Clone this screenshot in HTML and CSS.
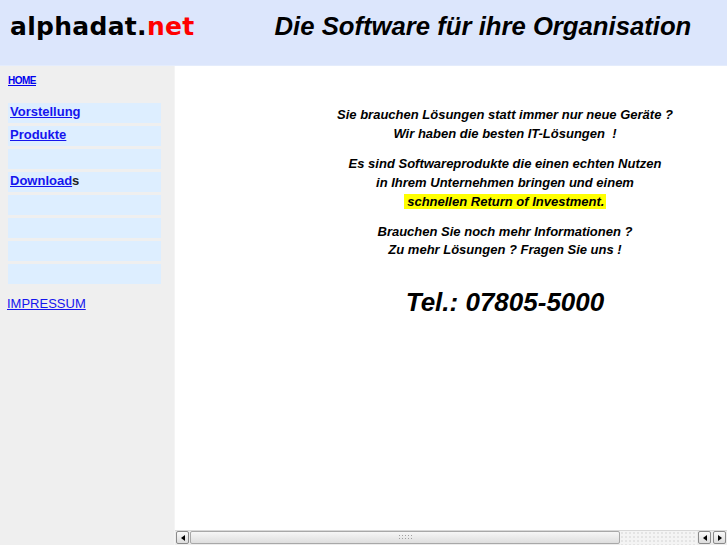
FILE: index.html
```html
<!DOCTYPE html>
<html lang="de">
<head>
<meta charset="utf-8">
<title>alphadat.net</title>
<link rel="stylesheet" href="styles.css">
</head>
<body>
<header class="top">
  <div class="logo">alphadat.<span class="net">net</span></div>
  <div class="slogan">Die Software für ihre Organisation</div>
</header>
<div class="layout">
  <aside class="side">
    <a class="home" href="#">HOME</a>
    <ul class="menu">
      <li><a href="#">Vorstellung</a></li>
      <li><a href="#">Produkte</a></li>
      <li></li>
      <li><a href="#">Download</a>s</li>
      <li></li>
      <li></li>
      <li></li>
      <li></li>
    </ul>
    <a class="impressum" href="#">IMPRESSUM</a>
  </aside>
  <main class="main">
    <div class="content">
      <p class="para">Sie brauchen Lösungen statt immer nur neue Geräte ?<br>Wir haben die besten IT-Lösungen&nbsp; !</p>
      <p class="para">Es sind Softwareprodukte die einen echten Nutzen<br>in Ihrem Unternehmen bringen und einem<br><span class="mark">&nbsp;schnellen Return of Investment.</span></p>
      <p class="para">Brauchen Sie noch mehr Informationen ?<br>Zu mehr Lösungen ? Fragen Sie uns !</p>
      <p class="tel">Tel.: 07805-5000</p>
    </div>
    <div class="hscroll">
      <div class="btn"><span class="tri left"></span></div>
      <div class="thumb"><span class="grip"></span></div>
      <div class="track"></div>
      <div class="btn"><span class="tri left"></span></div>
      <div class="btn"><span class="tri right"></span></div>
    </div>
  </main>
</div>
</body>
</html>
```

FILE: styles.css
```css
html, body {
  margin: 0;
  padding: 0;
  height: 545px;
  overflow: hidden;
}
body {
  font-family: "Liberation Sans", Arial, sans-serif;
  background: #ffffff;
}
.top {
  height: 66px;
  background: #dce6fc;
  display: flex;
  align-items: flex-start;
  border-bottom: 1px solid #e4ecfc;
  box-sizing: border-box;
}
.logo {
  font-family: "DejaVu Sans", Verdana, sans-serif;
  font-weight: bold;
  font-size: 25px;
  color: #000;
  margin: 12px 0 0 10px;
  line-height: 30px;
  letter-spacing: 0.3px;
}
.net { color: #ff0000; }
.slogan {
  font-weight: bold;
  font-style: italic;
  font-size: 25.7px;
  line-height: 30px;
  margin: 11px 0 0 80px;
  color: #000;
}
.layout {
  display: grid;
  grid-template-columns: 175px 1fr;
  height: 479px;
}
.side {
  background: #efefef;
  border-right: 1px solid #f4f4f4;
  padding: 8px 0 0 0;
}
.home {
  display: block;
  margin-left: 8px;
  font-size: 10px;
  font-weight: bold;
  color: #0000ee;
  letter-spacing: -0.5px;
  line-height: 14px;
}
.menu {
  list-style: none;
  margin: 15px 0 0 8px;
  padding: 0;
  width: 153px;
  display: flex;
  flex-direction: column;
  gap: 3px;
}
.menu li {
  background: #ddeeff;
  height: 20px;
  font-size: 13px;
  font-weight: bold;
  line-height: 17px;
  padding-left: 2px;
  color: #222;
}
.menu a { color: #1515ee; }
.impressum {
  display: block;
  margin: 12px 0 0 7px;
  font-size: 13px;
  color: #1515ee;
  line-height: 16px;
}
.main {
  display: flex;
  flex-direction: column;
  min-width: 0;
  overflow: hidden;
}
.content {
  flex: 1;
  padding: 40px 0 0 0;
  width: 660px;
  font-weight: bold;
  font-style: italic;
  font-size: 13px;
  text-align: center;
  color: #000;
}
.para {
  margin: 0 0 11px 0;
  line-height: 18.7px;
}
.para + .para { margin-top: 0; }
.para:first-child { margin-bottom: 12px; }
.mark { background: #ffff00; padding-right: 2px; }
.tel {
  margin: 27px 0 0 0;
  font-size: 26px;
  line-height: 30px;
}
.hscroll {
  height: 15px;
  display: flex;
  background: #ececec;
  border-top: 1px solid #d8d8d8;
  box-sizing: border-box;
  flex: none;
}
.btn {
  width: 13px;
  height: 13px;
  margin: 0 1px;
  border: 1px solid #8a8a8a;
  border-radius: 2px;
  background: linear-gradient(#fafafa, #dcdcdc);
  display: flex;
  align-items: center;
  justify-content: center;
  box-sizing: border-box;
}
.tri { width: 0; height: 0; border-top: 3px solid transparent; border-bottom: 3px solid transparent; }
.tri.left { border-right: 4px solid #000; }
.tri.right { border-left: 4px solid #000; }
.thumb {
  width: 430px;
  height: 13px;
  border: 1px solid #a8a8a8;
  border-radius: 2px;
  background: linear-gradient(#f6f6f6, #dedede);
  box-sizing: border-box;
  display: flex;
  align-items: center;
  justify-content: center;
}
.grip {
  width: 15px;
  height: 7px;
  background-image: radial-gradient(#a0a0a0 40%, transparent 45%);
  background-size: 3px 3px;
}
.track {
  flex: 1;
  background-color: #f4f4f4;
  background-image: radial-gradient(#e4e4e4 40%, transparent 45%);
  background-size: 4px 4px;
}
```
